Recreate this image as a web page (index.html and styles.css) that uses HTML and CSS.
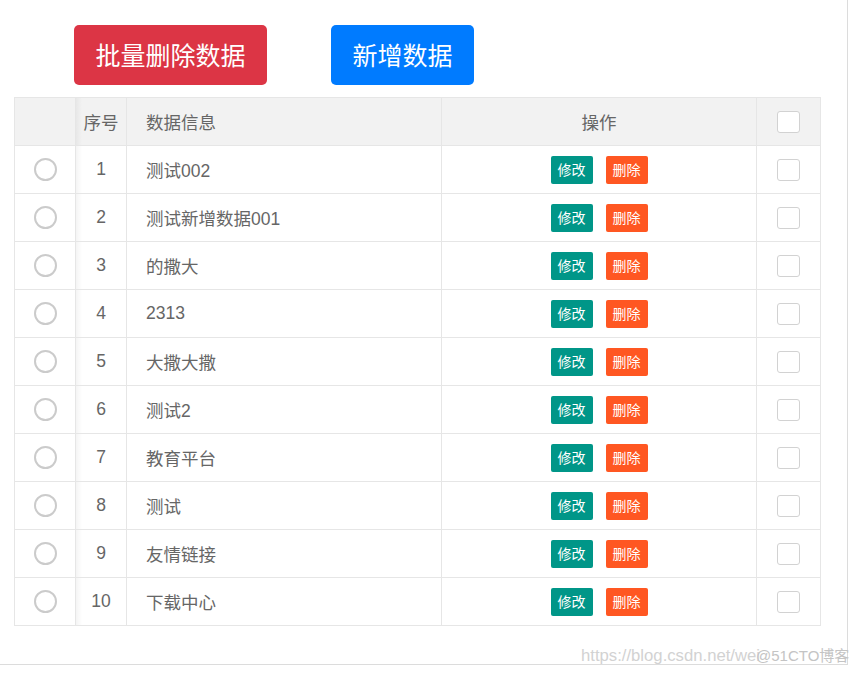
FILE: index.html
```html
<!DOCTYPE html>
<html lang="zh">
<head>
<meta charset="utf-8">
<title>数据列表</title>
<link rel="stylesheet" href="styles.css">
</head>
<body>
<div class="frame">
  <div class="toolbar">
    <button class="btn btn-red">批量删除数据</button>
    <button class="btn btn-blue">新增数据</button>
  </div>
  <div class="grid">
    <div class="cell head"></div>
    <div class="cell head c2 shade">序号</div>
    <div class="cell head c3">数据信息</div>
    <div class="cell head c4">操作</div>
    <div class="cell head c5"><span class="check"></span></div>

    <div class="cell"><span class="radio"></span></div><div class="cell c2 shade">1</div><div class="cell c3">测试002</div><div class="cell c4"><span class="mini edit">修改</span><span class="mini del">删除</span></div><div class="cell c5"><span class="check"></span></div>
    <div class="cell"><span class="radio"></span></div><div class="cell c2 shade">2</div><div class="cell c3">测试新增数据001</div><div class="cell c4"><span class="mini edit">修改</span><span class="mini del">删除</span></div><div class="cell c5"><span class="check"></span></div>
    <div class="cell"><span class="radio"></span></div><div class="cell c2 shade">3</div><div class="cell c3">的撒大</div><div class="cell c4"><span class="mini edit">修改</span><span class="mini del">删除</span></div><div class="cell c5"><span class="check"></span></div>
    <div class="cell"><span class="radio"></span></div><div class="cell c2 shade">4</div><div class="cell c3">2313</div><div class="cell c4"><span class="mini edit">修改</span><span class="mini del">删除</span></div><div class="cell c5"><span class="check"></span></div>
    <div class="cell"><span class="radio"></span></div><div class="cell c2 shade">5</div><div class="cell c3">大撒大撒</div><div class="cell c4"><span class="mini edit">修改</span><span class="mini del">删除</span></div><div class="cell c5"><span class="check"></span></div>
    <div class="cell"><span class="radio"></span></div><div class="cell c2 shade">6</div><div class="cell c3">测试2</div><div class="cell c4"><span class="mini edit">修改</span><span class="mini del">删除</span></div><div class="cell c5"><span class="check"></span></div>
    <div class="cell"><span class="radio"></span></div><div class="cell c2 shade">7</div><div class="cell c3">教育平台</div><div class="cell c4"><span class="mini edit">修改</span><span class="mini del">删除</span></div><div class="cell c5"><span class="check"></span></div>
    <div class="cell"><span class="radio"></span></div><div class="cell c2 shade">8</div><div class="cell c3">测试</div><div class="cell c4"><span class="mini edit">修改</span><span class="mini del">删除</span></div><div class="cell c5"><span class="check"></span></div>
    <div class="cell"><span class="radio"></span></div><div class="cell c2 shade">9</div><div class="cell c3">友情链接</div><div class="cell c4"><span class="mini edit">修改</span><span class="mini del">删除</span></div><div class="cell c5"><span class="check"></span></div>
    <div class="cell"><span class="radio"></span></div><div class="cell c2 shade">10</div><div class="cell c3">下载中心</div><div class="cell c4"><span class="mini edit">修改</span><span class="mini del">删除</span></div><div class="cell c5"><span class="check"></span></div>
  </div>
</div>
<div class="watermark"><span class="wm-url">https://blog.csdn.net/wei</span><span class="wm-tag">@51CTO博客</span></div>
</body>
</html>
```

FILE: styles.css
```css
html, body {
  margin: 0;
  padding: 0;
  background: #fff;
}
body {
  font-family: "Liberation Sans", "Noto Sans CJK SC", sans-serif;
  color: #666;
  width: 862px;
  height: 676px;
  overflow: hidden;
  position: relative;
}
.frame {
  box-sizing: border-box;
  width: 848px;
  height: 665px;
  border-right: 1px solid #dcdcdc;
  border-bottom: 1px solid #dcdcdc;
  padding-top: 25px;
}
.toolbar {
  display: flex;
  gap: 64px;
  padding-left: 74px;
  height: 60px;
}
.btn {
  font-family: "Noto Sans CJK SC", sans-serif;
  font-size: 25px;
  color: #fff;
  border: none;
  border-radius: 5px;
  height: 60px;
  padding: 0 21px 2px;
  line-height: 58px;
  margin: 0;
}
.btn-red { background: #dc3545; width: 193px; }
.btn-blue { background: #007bff; width: 143px; }

.grid {
  margin-top: 12px;
  margin-left: 14px;
  display: grid;
  grid-template-columns: 61px 51px 315px 315px 64px;
  grid-auto-rows: 48px;
  width: 807px;
  box-sizing: border-box;
  border-left: 1px solid #e6e6e6;
  border-top: 1px solid #e6e6e6;
}
.cell {
  box-sizing: border-box;
  border-right: 1px solid #e6e6e6;
  border-bottom: 1px solid #e6e6e6;
  display: flex;
  align-items: center;
  justify-content: center;
  font-size: 17.5px;
  color: #666;
  padding-bottom: 1px;
}
.head {
  background: #f2f2f2;
}
.shade {
  background-image: linear-gradient(to right, rgba(0,0,0,0.045), rgba(0,0,0,0) 6px);
}
.c3 {
  justify-content: flex-start;
  padding-left: 19px;
}
.radio {
  width: 19px;
  height: 19px;
  border: 2px solid #cbcbcb;
  border-radius: 50%;
  margin-top: 1px;
}
.check {
  box-sizing: border-box;
  width: 23px;
  height: 22px;
  border: 1px solid #d2d2d2;
  border-radius: 3px;
  background: #fff;
  margin-top: 1px;
}
.c4 { gap: 13px; padding-bottom: 0; }
.mini {
  display: inline-block;
  height: 28px;
  line-height: 27px;
  padding: 0 7px;
  font-size: 14px;
  color: #fff;
  border-radius: 2px;
  font-family: "Noto Sans CJK SC", sans-serif;
}
.edit { background: #009688; }
.del { background: #ff5722; }

.watermark {
  position: absolute;
  left: 581px;
  top: 644px;
  font-size: 16.7px;
  color: #d2d2d2;
  white-space: nowrap;
  font-family: "Liberation Sans", "Noto Sans CJK SC", sans-serif;
}
.wm-tag {
  margin-left: -4px;
  font-size: 15px;
  color: #c4c4c4;
}
```
